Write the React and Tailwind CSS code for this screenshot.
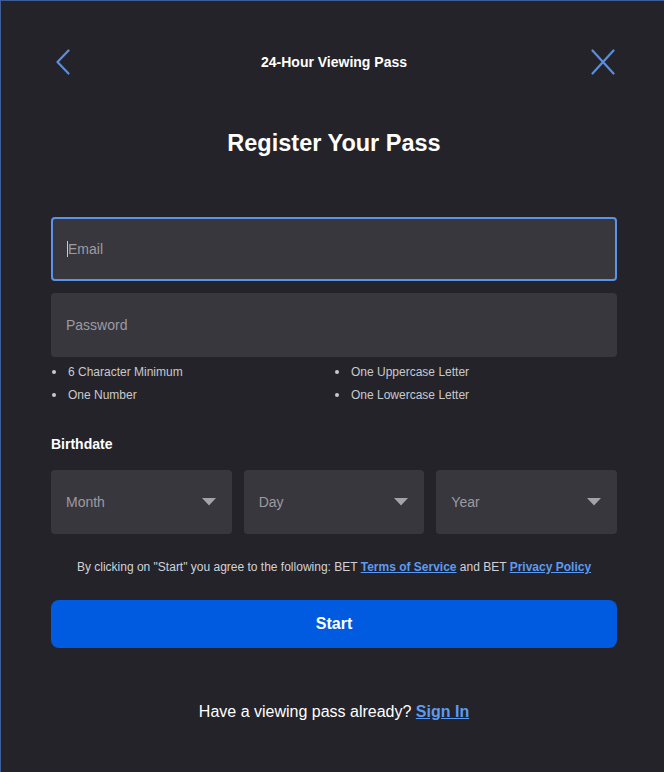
import React from "react";

function Chevron() {
  return (
    <svg width="14" height="26" viewBox="0 0 14 26" fill="none">
      <path d="M12.5 1.5 L1.5 13 L12.5 24.5" stroke="#5b8fdc" strokeWidth="2.2" strokeLinecap="round" strokeLinejoin="round" />
    </svg>
  );
}

function XIcon() {
  return (
    <svg width="24" height="26" viewBox="0 0 24 26" fill="none">
      <path d="M1.5 1.5 L22.5 24.5 M22.5 1.5 L1.5 24.5" stroke="#5b8fdc" strokeWidth="2.2" strokeLinecap="round" />
    </svg>
  );
}

function Caret() {
  return (
    <svg width="14" height="8" viewBox="0 0 14 8">
      <path d="M0 0 L14 0 L7 7.5 Z" fill="#a3a3a8" />
    </svg>
  );
}

function Select({ label }) {
  return (
    <div className="flex-1 h-[64px] rounded-[4px] bg-[#38373d] flex items-center justify-between pl-[15px] pr-[16px]">
      <span className="text-[14px] text-[#9c9ba1]">{label}</span>
      <Caret />
    </div>
  );
}

function Bullet({ children }) {
  return (
    <div className="flex items-center">
      <span className="w-[4px] h-[4px] rounded-full bg-[#c9c9cd] ml-[1px] mr-[12px]"></span>
      {children}
    </div>
  );
}

export default function App() {
  return (
    <div
      className="w-[664px] h-[772px] bg-[#242329] border-t border-l border-[#3e5c96] text-white overflow-hidden"
      style={{ fontFamily: '"Liberation Sans", Arial, sans-serif' }}
    >
      <div className="pl-[50px] pr-[47px]">
        <div className="grid grid-cols-[1fr_auto_1fr] items-center h-[26px] mt-[48px]">
          <div className="flex items-center pl-[5px]"><Chevron /></div>
          <div className="text-[14px] font-bold">24-Hour Viewing Pass</div>
          <div className="flex justify-end pr-[2px]"><XIcon /></div>
        </div>
        <h1 className="text-center text-[23.5px] font-bold mt-[53px] leading-[30px]">Register Your Pass</h1>

        <div className="mt-[59px] h-[64px] rounded-[4px] bg-[#38373d] border-2 border-[#5b93e8] flex items-center pl-[14px]">
          <span className="w-px h-[16px] bg-[#c9c9cc]"></span>
          <span className="text-[14px] text-[#9c9ba1]">Email</span>
        </div>
        <div className="mt-[12px] h-[64px] rounded-[4px] bg-[#38373d] flex items-center pl-[15px]">
          <span className="text-[14px] text-[#9c9ba1]">Password</span>
        </div>

        <div className="grid grid-cols-2 mt-[8px] text-[12px] text-[#c9c9cd] gap-y-[9px] leading-[14px]">
          <Bullet>6 Character Minimum</Bullet>
          <Bullet>One Uppercase Letter</Bullet>
          <Bullet>One Number</Bullet>
          <Bullet>One Lowercase Letter</Bullet>
        </div>

        <div className="mt-[34px] text-[14px] font-bold leading-[16px]">Birthdate</div>
        <div className="flex gap-[12px] mt-[18px]">
          <Select label="Month" />
          <Select label="Day" />
          <Select label="Year" />
        </div>

        <p className="text-center text-[12px] text-[#d2d2d6] mt-[26px] leading-[14px]">
          By clicking on "Start" you agree to the following: BET{" "}
          <a className="text-[#5b9bf3] font-bold underline">Terms of Service</a> and BET{" "}
          <a className="text-[#5b9bf3] font-bold underline">Privacy Policy</a>
        </p>

        <button className="mt-[26px] w-full h-[48px] rounded-[8px] bg-[#005be0] text-white text-[16px] font-bold">
          Start
        </button>

        <p className="text-center text-[16px] mt-[55px] leading-[18px]">
          Have a viewing pass already?{" "}
          <a className="text-[#5b9bf3] font-bold underline">Sign In</a>
        </p>
      </div>
    </div>
  );
}
